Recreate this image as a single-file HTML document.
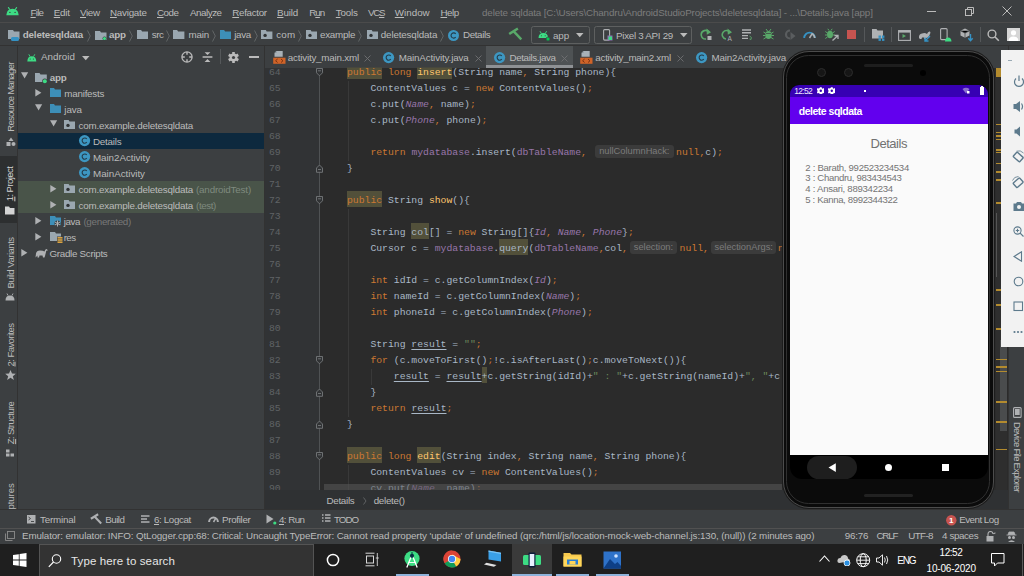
<!DOCTYPE html><html><head><meta charset="utf-8"><style>
*{margin:0;padding:0;box-sizing:border-box}
html,body{width:1024px;height:576px;overflow:hidden;background:#3c3f41;font-family:"Liberation Sans",sans-serif;color:#bbbbbb}
.a{position:absolute;white-space:pre}
.t{line-height:16px}
.m{font-family:"Liberation Mono",monospace;font-size:9.75px;line-height:16px;color:#a9b7c6}
u{text-decoration:underline;text-underline-offset:1px;text-decoration-thickness:1px}
.kw{color:#cc7832}
.fd{color:#9876aa;font-style:italic}
.fn{color:#ffc66d}
.st{color:#6a8759}
.pf{color:#9876aa}
.hl{background:#52503a;display:inline-block;height:16px;padding-top:2px;margin-top:-2px;vertical-align:top;line-height:16px}
.hint{display:inline-block;font-family:"Liberation Sans",sans-serif;font-size:9.3px;color:#7c7c7c;background:#3b3b3b;border-radius:3px;height:13px;line-height:13px;text-align:center;vertical-align:top;margin-top:1.5px;font-style:normal}
.un{text-decoration:underline;text-underline-offset:2px}
</style></head><body>
<div class="a" style="left:0px;top:0px;width:1024px;height:23px;background:#3c3f41;"></div>
<div class="a" style="left:0px;top:22px;width:1024px;height:1px;background:#4b4b4b;"></div>
<svg class="a" style="left:6px;top:7px;" width="14" height="9" viewBox="0 0 14 9"><path d="M0.3 8.3 Q0.6 1.8 6.5 1.8 Q12.4 1.8 12.7 8.3 Z" fill="#3ddc84"/><path d="M2.2 0.2 L3.8 2.6 M10.8 0.2 L9.2 2.6" stroke="#3ddc84" stroke-width="1.1"/><circle cx="3.9" cy="5.4" r="0.7" fill="#3c3f41"/><circle cx="9.1" cy="5.4" r="0.7" fill="#3c3f41"/></svg>
<div class="a t" style="left:30.50px;top:4.50px;font-size:9.8px;color:#bbbbbb;letter-spacing:-0.764px"><u>F</u>ile</div>
<div class="a t" style="left:53.75px;top:4.50px;font-size:9.8px;color:#bbbbbb;letter-spacing:-0.212px"><u>E</u>dit</div>
<div class="a t" style="left:80.00px;top:4.50px;font-size:9.8px;color:#bbbbbb;letter-spacing:-0.355px"><u>V</u>iew</div>
<div class="a t" style="left:110.00px;top:4.50px;font-size:9.8px;color:#bbbbbb;letter-spacing:-0.240px"><u>N</u>avigate</div>
<div class="a t" style="left:157.00px;top:4.50px;font-size:9.8px;color:#bbbbbb;letter-spacing:-0.476px"><u>C</u>ode</div>
<div class="a t" style="left:190.00px;top:4.50px;font-size:9.8px;color:#bbbbbb;letter-spacing:-0.477px">Anal<u>y</u>ze</div>
<div class="a t" style="left:232.30px;top:4.50px;font-size:9.8px;color:#bbbbbb;letter-spacing:-0.320px"><u>R</u>efactor</div>
<div class="a t" style="left:277.10px;top:4.50px;font-size:9.8px;color:#bbbbbb;letter-spacing:-0.173px"><u>B</u>uild</div>
<div class="a t" style="left:309.20px;top:4.50px;font-size:9.8px;color:#bbbbbb;letter-spacing:-0.939px">R<u>u</u>n</div>
<div class="a t" style="left:335.80px;top:4.50px;font-size:9.8px;color:#bbbbbb;letter-spacing:-0.194px"><u>T</u>ools</div>
<div class="a t" style="left:367.90px;top:4.50px;font-size:9.8px;color:#bbbbbb;letter-spacing:-1.225px">VC<u>S</u></div>
<div class="a t" style="left:394.80px;top:4.50px;font-size:9.8px;color:#bbbbbb;letter-spacing:0.009px"><u>W</u>indow</div>
<div class="a t" style="left:440.50px;top:4.50px;font-size:9.8px;color:#bbbbbb;letter-spacing:-0.485px"><u>H</u>elp</div>
<div class="a t" style="left:482.00px;top:4.50px;font-size:9.8px;color:#7d7d7d;letter-spacing:-0.130px">delete sqldata [C:\Users\Chandru\AndroidStudioProjects\deletesqldata] - ...\Details.java [app]</div>
<div class="a" style="left:927px;top:11px;width:9px;height:1px;background:#bbbbbb;"></div>
<svg class="a" style="left:964px;top:6px;" width="11" height="11" viewBox="0 0 11 11"><rect x="1.5" y="3.5" width="6" height="6" fill="none" stroke="#bbbbbb"/><path d="M3.5 3.5 V1.5 H9.5 V7.5 H7.5" fill="none" stroke="#bbbbbb"/></svg>
<svg class="a" style="left:1002px;top:6px;" width="10" height="10" viewBox="0 0 10 10"><path d="M0.5 0.5 L9.5 9.5 M9.5 0.5 L0.5 9.5" stroke="#bbbbbb" stroke-width="1"/></svg>
<div class="a" style="left:0px;top:23px;width:1024px;height:23px;background:#3c3f41;"></div>
<div class="a" style="left:0px;top:45px;width:1024px;height:1px;background:#323232;"></div>
<div class="a" style="left:0px;top:46px;width:17px;height:463px;background:#3c3f41;"></div>
<div class="a" style="left:17px;top:46px;width:1px;height:463px;background:#323232;"></div>
<div class="a" style="left:0px;top:156px;width:17px;height:67px;background:#2d2f30;"></div>
<div class="a" style="left:18px;top:46px;width:247px;height:463px;background:#3c3f41;"></div>
<div class="a" style="left:264px;top:46px;width:1px;height:463px;background:#323232;"></div>
<div class="a" style="left:18px;top:133px;width:246px;height:16px;background:#0d293e;"></div>
<div class="a" style="left:18px;top:181px;width:246px;height:32px;background:#495449;"></div>
<div class="a" style="left:265px;top:46px;width:759px;height:21.5px;background:#3c3f41;"></div>
<div class="a" style="left:486px;top:46px;width:87px;height:20px;background:#4e5254;"></div>
<div class="a" style="left:265px;top:67.5px;width:55px;height:422.5px;background:#313335;"></div>
<div class="a" style="left:320px;top:67.5px;width:704px;height:422.5px;background:#2b2b2b;"></div>
<div class="a" style="left:265px;top:490px;width:759px;height:19px;background:#2f3133;"></div>
<div class="a" style="left:0px;top:509px;width:1024px;height:19px;background:#3c3f41;"></div>
<div class="a" style="left:0px;top:509px;width:1024px;height:1px;background:#323232;"></div>
<div class="a" style="left:0px;top:528px;width:1024px;height:16px;background:#3c3f41;"></div>
<div class="a" style="left:0px;top:528px;width:1024px;height:1px;background:#515151;"></div>
<div class="a" style="left:0px;top:544px;width:1024px;height:32px;background:#1f1f1f;"></div>
<svg class="a" style="left:8px;top:30px;" width="12" height="11" viewBox="0 0 12 11"><path d="M0 0 H5 L6 1.5 H11.5 V9 H0 Z" fill="#9aa7b0"/><rect x="3" y="7" width="8" height="4" rx="1.5" fill="#3592c4"/></svg>
<div class="a t" style="left:22.80px;top:26.80px;font-size:9.8px;color:#bbbbbb;letter-spacing:-0.179px;font-weight:bold;">deletesqldata</div>
<svg class="a" style="left:87px;top:30px;" width="4" height="12" viewBox="0 0 4 12"><path d="M0.5 0.5 L3.3 6 L0.5 11.5" fill="none" stroke="#6b6e70" stroke-width="0.8"/></svg>
<svg class="a" style="left:94.5px;top:31px;" width="12" height="10" viewBox="0 0 12 10"><path d="M0 0 H5 L6 1.5 H11.5 V9 H0 Z" fill="#9aa7b0"/><circle cx="9.5" cy="7.5" r="2" fill="#3c3f41"/><circle cx="9.5" cy="7.5" r="1.6" fill="#3ddc84"/></svg>
<div class="a t" style="left:109.00px;top:26.80px;font-size:9.8px;color:#bbbbbb;letter-spacing:-0.274px;font-weight:bold;">app</div>
<svg class="a" style="left:129px;top:30px;" width="4" height="12" viewBox="0 0 4 12"><path d="M0.5 0.5 L3.3 6 L0.5 11.5" fill="none" stroke="#6b6e70" stroke-width="0.8"/></svg>
<svg class="a" style="left:136.6px;top:30px;" width="11.4" height="10" viewBox="0 0 11.4 10"><path d="M0 0 H4.1 L5.1 1.6 H11.4 V9 H0 Z" fill="#9aa7b0"/></svg>
<div class="a t" style="left:151.80px;top:26.80px;font-size:9.8px;color:#bbbbbb;letter-spacing:-0.521px;">src</div>
<svg class="a" style="left:166.2px;top:30px;" width="4" height="12" viewBox="0 0 4 12"><path d="M0.5 0.5 L3.3 6 L0.5 11.5" fill="none" stroke="#6b6e70" stroke-width="0.8"/></svg>
<svg class="a" style="left:173.4px;top:30px;" width="11.4" height="10" viewBox="0 0 11.4 10"><path d="M0 0 H4.1 L5.1 1.6 H11.4 V9 H0 Z" fill="#9aa7b0"/></svg>
<div class="a t" style="left:188.60px;top:26.80px;font-size:9.8px;color:#bbbbbb;letter-spacing:-0.210px;">main</div>
<svg class="a" style="left:212.3px;top:30px;" width="4" height="12" viewBox="0 0 4 12"><path d="M0.5 0.5 L3.3 6 L0.5 11.5" fill="none" stroke="#6b6e70" stroke-width="0.8"/></svg>
<svg class="a" style="left:219.8px;top:30px;" width="11.4" height="10" viewBox="0 0 11.4 10"><path d="M0 0 H4.1 L5.1 1.6 H11.4 V9 H0 Z" fill="#3d8fb8"/></svg>
<div class="a t" style="left:234.30px;top:26.80px;font-size:9.8px;color:#bbbbbb;letter-spacing:-0.369px;">java</div>
<svg class="a" style="left:254px;top:30px;" width="4" height="12" viewBox="0 0 4 12"><path d="M0.5 0.5 L3.3 6 L0.5 11.5" fill="none" stroke="#6b6e70" stroke-width="0.8"/></svg>
<svg class="a" style="left:261.3px;top:30px;" width="11.4" height="10" viewBox="0 0 11.4 10"><path d="M0 0 H4.8 L5.7 1.5 H11.4 V9 H0 Z" fill="#9aa7b0"/><circle cx="4.1" cy="5.4" r="1.7" fill="#2f3234"/></svg>
<div class="a t" style="left:276.20px;top:26.80px;font-size:9.8px;color:#bbbbbb;letter-spacing:0.195px;">com</div>
<svg class="a" style="left:297.8px;top:30px;" width="4" height="12" viewBox="0 0 4 12"><path d="M0.5 0.5 L3.3 6 L0.5 11.5" fill="none" stroke="#6b6e70" stroke-width="0.8"/></svg>
<svg class="a" style="left:306px;top:30px;" width="11" height="10" viewBox="0 0 11 10"><path d="M0 0 H4.6 L5.5 1.5 H11 V9 H0 Z" fill="#9aa7b0"/><circle cx="4.0" cy="5.4" r="1.7" fill="#2f3234"/></svg>
<div class="a t" style="left:320.00px;top:26.80px;font-size:9.8px;color:#bbbbbb;letter-spacing:-0.263px;">example</div>
<svg class="a" style="left:358.4px;top:30px;" width="4" height="12" viewBox="0 0 4 12"><path d="M0.5 0.5 L3.3 6 L0.5 11.5" fill="none" stroke="#6b6e70" stroke-width="0.8"/></svg>
<svg class="a" style="left:366.6px;top:30px;" width="11.2" height="10" viewBox="0 0 11.2 10"><path d="M0 0 H4.7 L5.6 1.5 H11.2 V9 H0 Z" fill="#9aa7b0"/><circle cx="4.0" cy="5.4" r="1.7" fill="#2f3234"/></svg>
<div class="a t" style="left:380.80px;top:26.80px;font-size:9.8px;color:#bbbbbb;letter-spacing:-0.146px;">deletesqldata</div>
<svg class="a" style="left:440px;top:30px;" width="4" height="12" viewBox="0 0 4 12"><path d="M0.5 0.5 L3.3 6 L0.5 11.5" fill="none" stroke="#6b6e70" stroke-width="0.8"/></svg>
<svg class="a" style="left:447.1px;top:28.5px;" width="13.0" height="13.0" viewBox="0 0 13.0 13.0"><circle cx="6.5" cy="6.5" r="5.5" fill="#3d97c2"/><path d="M8.7 4.9 A2.6 2.6 0 1 0 8.7 8.1" fill="none" stroke="#233c4b" stroke-width="1.1"/></svg>
<div class="a t" style="left:463.00px;top:26.80px;font-size:9.8px;color:#bbbbbb;letter-spacing:-0.379px;">Details</div>
<svg class="a" style="left:508px;top:27px;" width="15" height="15" viewBox="0 0 15 15"><path d="M2.3 6.3 L8.8 2.2" stroke="#59a869" stroke-width="2.6" stroke-linecap="square"/><path d="M5.5 4.2 L13.3 12.4" stroke="#59a869" stroke-width="2.4"/></svg>
<svg class="a" style="left:531px;top:25.5px;" width="59" height="18" viewBox="0 0 59 18"><rect x="0.5" y="0.5" width="58" height="17" rx="2" fill="none" stroke="#5e6060"/></svg>
<svg class="a" style="left:538px;top:31px;" width="13" height="10" viewBox="0 0 13 10"><path d="M0.5 7 Q0.7 2 5.3 2 Q9.9 2 10.1 7 Z" fill="#3ddc84"/><path d="M2 0.2 L3.3 2.4 M8.6 0.2 L7.3 2.4" stroke="#3ddc84" stroke-width="0.9"/><circle cx="3.4" cy="4.8" r="0.55" fill="#3c3f41"/><circle cx="7.2" cy="4.8" r="0.55" fill="#3c3f41"/><circle cx="10" cy="8" r="2" fill="#00c853" stroke="#3c3f41" stroke-width="0.7"/></svg>
<div class="a t" style="left:553.00px;top:27.80px;font-size:9.8px;color:#bbbbbb;letter-spacing:-0.117px;">app</div>
<svg class="a" style="left:576px;top:33px;" width="8" height="5" viewBox="0 0 8 5"><path d="M0 0 H7.5 L3.75 4.2 Z" fill="#bbbbbb"/></svg>
<svg class="a" style="left:594px;top:25.5px;" width="98" height="18" viewBox="0 0 98 18"><rect x="0.5" y="0.5" width="97" height="17" rx="2" fill="none" stroke="#5e6060"/></svg>
<svg class="a" style="left:603px;top:29px;" width="10" height="13" viewBox="0 0 10 13"><rect x="0.6" y="0.6" width="6" height="10.5" rx="1" fill="none" stroke="#afb1b3" stroke-width="1.1"/><rect x="4.5" y="6.5" width="5" height="5" fill="#8e6fb7"/><rect x="5.5" y="7.5" width="3.5" height="3.5" fill="#3ddc84"/></svg>
<div class="a t" style="left:616.00px;top:27.80px;font-size:9.8px;color:#bbbbbb;letter-spacing:-0.287px;">Pixel 3 API 29</div>
<svg class="a" style="left:680px;top:33px;" width="8" height="5" viewBox="0 0 8 5"><path d="M0 0 H7.5 L3.75 4.2 Z" fill="#bbbbbb"/></svg>
<svg class="a" style="left:700px;top:28px;" width="12" height="13" viewBox="0 0 12 13"><path d="M9.5 5 A4.3 4.3 0 1 0 6 11" fill="none" stroke="#59a869" stroke-width="1.6"/><path d="M6.5 0.5 L11 4.2 L6.8 6.8 Z" fill="#59a869"/><rect x="7.5" y="8" width="4" height="4" fill="#afb1b3"/></svg>
<svg class="a" style="left:720.5px;top:28px;" width="12" height="13" viewBox="0 0 12 13"><path d="M9.5 5 A4.3 4.3 0 1 0 5 11" fill="none" stroke="#59a869" stroke-width="1.6"/><path d="M6.5 0.5 L11 4.2 L6.8 6.8 Z" fill="#59a869"/><text x="6.5" y="12.5" font-family="Liberation Sans" font-size="6.5" fill="#afb1b3">A</text></svg>
<svg class="a" style="left:742px;top:29px;" width="11" height="11" viewBox="0 0 11 11"><path d="M0 1 H9 M0 3.8 H9 M0 6.6 H6 M0 9.4 H6" stroke="#afb1b3" stroke-width="1.4"/><path d="M7.5 7 Q10.5 8 9 10.5 L7.5 10" fill="none" stroke="#59a869" stroke-width="0.9"/></svg>
<svg class="a" style="left:763px;top:28px;" width="11" height="12" viewBox="0 0 11 12"><ellipse cx="5.5" cy="7" rx="3.2" ry="4" fill="#59a869"/><path d="M0.5 4 L3 5.5 M10.5 4 L8 5.5 M0 7.5 H2.5 M11 7.5 H8.5 M0.5 11 L3 9.5 M10.5 11 L8 9.5 M3 1 L4.5 3 M8 1 L6.5 3" stroke="#59a869" stroke-width="1"/><path d="M3 5.5 H8" stroke="#3c3f41" stroke-width="0.7"/></svg>
<svg class="a" style="left:783px;top:28px;" width="13" height="13" viewBox="0 0 13 13"><path d="M7 2.5 A4 4 0 1 0 7 10.5" fill="none" stroke="#5a5d5f" stroke-width="2.2"/><path d="M7.5 4 L12.5 8 L7.5 12 Z" fill="#5a5d5f"/></svg>
<svg class="a" style="left:803px;top:30px;" width="13" height="9" viewBox="0 0 13 9"><path d="M1.2 8 A5.3 5.3 0 0 1 11.8 8" fill="none" stroke="#3592c4" stroke-width="1.8"/><path d="M6.5 8 L9.5 3.2" stroke="#afb1b3" stroke-width="1.5"/><path d="M9.5 4 A5.3 5.3 0 0 1 11.8 8" fill="none" stroke="#afb1b3" stroke-width="1.8"/></svg>
<svg class="a" style="left:825px;top:28px;" width="14" height="13" viewBox="0 0 14 13"><ellipse cx="5" cy="6.5" rx="3" ry="3.8" fill="#59a869"/><path d="M0.3 3.5 L2.5 5 M9.7 3.5 L7.5 5 M0 7 H2 M10 7 H8 M0.3 10.5 L2.5 9 M2.8 0.8 L4 2.5 M7.2 0.8 L6 2.5" stroke="#59a869" stroke-width="1"/><path d="M7.5 12.5 L13 7.5 M9.5 7.5 H13 V11" fill="none" stroke="#afb1b3" stroke-width="1.3"/></svg>
<div class="a" style="left:847px;top:30px;width:8.5px;height:8.5px;background:#c75450;"></div>
<div class="a" style="left:864px;top:27px;width:1px;height:15px;background:#55585a;"></div>
<div class="a" style="left:891px;top:27px;width:1px;height:15px;background:#55585a;"></div>
<div class="a" style="left:980px;top:27px;width:1px;height:15px;background:#55585a;"></div>
<svg class="a" style="left:872px;top:29px;" width="13" height="12" viewBox="0 0 13 12"><path d="M0 0 H4.5 L5.5 1.5 H11 V9.5 H0 Z" fill="#afb1b3"/><rect x="6.5" y="6.5" width="2.4" height="2.4" fill="#3592c4"/><rect x="10" y="6.5" width="2.4" height="2.4" fill="#3592c4"/><rect x="6.5" y="9.5" width="2.4" height="2.4" fill="#3592c4"/><rect x="10" y="9.5" width="2.4" height="2.4" fill="#3592c4"/></svg>
<svg class="a" style="left:898px;top:30px;" width="13" height="11" viewBox="0 0 13 11"><rect x="0.6" y="0.6" width="11.8" height="9.8" fill="none" stroke="#afb1b3" stroke-width="1.1"/><rect x="0.6" y="0.6" width="11.8" height="2" fill="#afb1b3"/><path d="M4.5 4 L8 6 L4.5 8 Z" fill="#59a869"/></svg>
<svg class="a" style="left:918px;top:29px;" width="14" height="13" viewBox="0 0 14 13"><path d="M1 9 Q0.5 5 4 4.5 Q7 3.5 9 5 Q10 2 12 2.5 Q13 3.5 12 5 L11 7 Q10 9 8 9 L7.5 10 H6 L6 8.5 L4 8.5 L3.5 10 H2 Z" fill="#afb1b3"/><path d="M12 7 L7 12 M7 8.5 V12 H10.5" fill="none" stroke="#3592c4" stroke-width="1.4"/></svg>
<svg class="a" style="left:940px;top:28px;" width="12" height="14" viewBox="0 0 12 14"><rect x="0.6" y="0.6" width="6.5" height="11" rx="1" fill="none" stroke="#afb1b3" stroke-width="1.1"/><path d="M5 13.5 Q5.3 9.5 8.2 9.5 Q11.2 9.5 11.5 13.5 Z" fill="#3ddc84"/></svg>
<svg class="a" style="left:960px;top:28px;" width="14" height="14" viewBox="0 0 14 14"><path d="M5 0.5 L9.5 2.8 V7.5 L5 9.8 L0.5 7.5 V2.8 Z" fill="#afb1b3"/><path d="M0.5 2.8 L5 5 L9.5 2.8 M5 5 V9.8" stroke="#3c3f41" stroke-width="0.7"/><path d="M10.5 6 V12.5 M8.3 10.2 L10.5 12.7 L12.7 10.2" fill="none" stroke="#3592c4" stroke-width="1.4"/></svg>
<svg class="a" style="left:987px;top:29px;" width="13" height="13" viewBox="0 0 13 13"><circle cx="5" cy="5" r="3.9" fill="none" stroke="#bbbbbb" stroke-width="1.4"/><path d="M7.8 7.8 L11.8 11.8" stroke="#bbbbbb" stroke-width="1.6"/></svg>
<svg class="a" style="left:1007px;top:28px;" width="13" height="13" viewBox="0 0 13 13"><rect width="13" height="13" fill="#d6d6d6"/><circle cx="6.5" cy="4.8" r="2.6" fill="#ffffff"/><path d="M1.5 13 Q1.5 8.5 6.5 8.5 Q11.5 8.5 11.5 13 Z" fill="#ffffff"/></svg>
<svg class="a" style="left:27px;top:53.5px;" width="10" height="8" viewBox="0 0 10 8"><path d="M0.3 7.5 Q0.5 2.2 4.8 2.2 Q9.1 2.2 9.3 7.5 Z" fill="#3ddc84"/><path d="M1.8 0.3 L3 2.5 M7.8 0.3 L6.6 2.5" stroke="#3ddc84" stroke-width="0.9"/><circle cx="3.2" cy="5" r="0.6" fill="#3c3f41"/><circle cx="6.4" cy="5" r="0.6" fill="#3c3f41"/></svg>
<div class="a t" style="left:41.00px;top:49.30px;font-size:9.8px;color:#bbbbbb;letter-spacing:0.032px;">Android</div>
<svg class="a" style="left:82px;top:55.5px;" width="8" height="5" viewBox="0 0 8 5"><path d="M0 0 H7.5 L3.75 4.2 Z" fill="#bbbbbb"/></svg>
<svg class="a" style="left:180.5px;top:51px;" width="12" height="12" viewBox="0 0 12 12"><circle cx="6" cy="6" r="5.1" fill="none" stroke="#bbbbbb" stroke-width="1.3"/><path d="M6 1 V3.8 M6 8.2 V11 M1 6 H3.8 M8.2 6 H11" stroke="#bbbbbb" stroke-width="1.4"/></svg>
<svg class="a" style="left:202px;top:51px;" width="11" height="12" viewBox="0 0 11 12"><path d="M0.6 6 H10.4" stroke="#bbbbbb" stroke-width="1.5"/><path d="M2.6 1.2 H8.4 L5.5 3.9 Z M2.6 10.9 H8.4 L5.5 8.1 Z" fill="#bbbbbb"/></svg>
<div class="a" style="left:220.2px;top:49px;width:1px;height:15px;background:#55585a;"></div>
<svg class="a" style="left:227.8px;top:51.5px;" width="11" height="11" viewBox="0 0 11 11"><g transform="translate(5.5 5.5)" fill="#bbbbbb"><circle r="3.9"/><rect x="-1.3" y="-5.5" width="2.6" height="11"/><rect x="-1.3" y="-5.5" width="2.6" height="11" transform="rotate(60)"/><rect x="-1.3" y="-5.5" width="2.6" height="11" transform="rotate(120)"/></g><circle cx="5.5" cy="5.5" r="1.6" fill="#3c3f41"/></svg>
<div class="a" style="left:249.4px;top:56.2px;width:9.6px;height:1.6px;background:#bbbbbb;"></div>
<svg class="a" style="left:20.8px;top:72.0px;" width="8" height="8" viewBox="0 0 8 8"><path d="M0 0.3 H7.2 L3.6 6.5 Z" fill="#afb1b3"/></svg>
<svg class="a" style="left:35px;top:72.5px;" width="13" height="11" viewBox="0 0 13 11"><path d="M0 0 H4.5 L5.5 1.5 H11.8 V9 H0 Z" fill="#9aa7b0"/><circle cx="9.8" cy="8.2" r="2.6" fill="#3c3f41"/><circle cx="9.8" cy="8.2" r="2" fill="#3ddc84"/></svg>
<div class="a t" style="left:49.80px;top:69.50px;font-size:9.8px;color:#bbbbbb;letter-spacing:-0.274px;font-weight:bold;">app</div>
<svg class="a" style="left:35px;top:88.5px;" width="7" height="8" viewBox="0 0 7 8"><path d="M0.3 0 L6.4 3.75 L0.3 7.5 Z" fill="#afb1b3"/></svg>
<svg class="a" style="left:49.8px;top:87.5px;" width="11" height="10" viewBox="0 0 11 10"><path d="M0 0 H4.0 L5.0 1.6 H11 V9 H0 Z" fill="#3d8fb8"/></svg>
<div class="a t" style="left:64.30px;top:85.50px;font-size:9.8px;color:#bbbbbb;letter-spacing:-0.226px;">manifests</div>
<svg class="a" style="left:34.5px;top:104.0px;" width="8" height="8" viewBox="0 0 8 8"><path d="M0 0.3 H7.2 L3.6 6.5 Z" fill="#afb1b3"/></svg>
<svg class="a" style="left:49.8px;top:103.5px;" width="11" height="10" viewBox="0 0 11 10"><path d="M0 0 H4.0 L5.0 1.6 H11 V9 H0 Z" fill="#3d8fb8"/></svg>
<div class="a t" style="left:64.30px;top:101.50px;font-size:9.8px;color:#bbbbbb;letter-spacing:-0.069px;">java</div>
<svg class="a" style="left:49.5px;top:120.0px;" width="8" height="8" viewBox="0 0 8 8"><path d="M0 0.3 H7.2 L3.6 6.5 Z" fill="#afb1b3"/></svg>
<svg class="a" style="left:64.3px;top:119.5px;" width="11" height="10" viewBox="0 0 11 10"><path d="M0 0 H4.6 L5.5 1.5 H11 V9 H0 Z" fill="#9aa7b0"/><circle cx="4.0" cy="5.4" r="1.7" fill="#2f3234"/></svg>
<div class="a t" style="left:78.60px;top:117.50px;font-size:9.8px;color:#bbbbbb;letter-spacing:-0.196px;">com.example.deletesqldata</div>
<svg class="a" style="left:77.7px;top:134.1px;" width="13.2" height="13.2" viewBox="0 0 13.2 13.2"><circle cx="6.6" cy="6.6" r="5.6" fill="#3d97c2"/><path d="M8.8 5.0 A2.6 2.6 0 1 0 8.8 8.2" fill="none" stroke="#233c4b" stroke-width="1.1"/></svg>
<div class="a t" style="left:93.00px;top:133.50px;font-size:9.8px;color:#bbbbbb;letter-spacing:-0.208px;">Details</div>
<svg class="a" style="left:77.7px;top:150.1px;" width="13.2" height="13.2" viewBox="0 0 13.2 13.2"><circle cx="6.6" cy="6.6" r="5.6" fill="#3d97c2"/><path d="M8.8 5.0 A2.6 2.6 0 1 0 8.8 8.2" fill="none" stroke="#233c4b" stroke-width="1.1"/></svg>
<div class="a t" style="left:93.00px;top:149.50px;font-size:9.8px;color:#bbbbbb;letter-spacing:-0.056px;">Main2Activity</div>
<svg class="a" style="left:77.7px;top:166.1px;" width="13.2" height="13.2" viewBox="0 0 13.2 13.2"><circle cx="6.6" cy="6.6" r="5.6" fill="#3d97c2"/><path d="M8.8 5.0 A2.6 2.6 0 1 0 8.8 8.2" fill="none" stroke="#233c4b" stroke-width="1.1"/></svg>
<div class="a t" style="left:93.00px;top:165.50px;font-size:9.8px;color:#bbbbbb;letter-spacing:-0.023px;">MainActivity</div>
<svg class="a" style="left:49.5px;top:184.5px;" width="7" height="8" viewBox="0 0 7 8"><path d="M0.3 0 L6.4 3.75 L0.3 7.5 Z" fill="#afb1b3"/></svg>
<svg class="a" style="left:64.3px;top:183.5px;" width="11" height="10" viewBox="0 0 11 10"><path d="M0 0 H4.6 L5.5 1.5 H11 V9 H0 Z" fill="#9aa7b0"/><circle cx="4.0" cy="5.4" r="1.7" fill="#2f3234"/></svg>
<div class="a t" style="left:78.60px;top:181.50px;font-size:9.8px;color:#bbbbbb;letter-spacing:-0.196px;">com.example.deletesqldata</div>
<div class="a t" style="left:196.00px;top:181.50px;font-size:9.8px;color:#7f8a7f;letter-spacing:-0.169px;">(androidTest)</div>
<svg class="a" style="left:49.5px;top:200.5px;" width="7" height="8" viewBox="0 0 7 8"><path d="M0.3 0 L6.4 3.75 L0.3 7.5 Z" fill="#afb1b3"/></svg>
<svg class="a" style="left:64.3px;top:199.5px;" width="11" height="10" viewBox="0 0 11 10"><path d="M0 0 H4.6 L5.5 1.5 H11 V9 H0 Z" fill="#9aa7b0"/><circle cx="4.0" cy="5.4" r="1.7" fill="#2f3234"/></svg>
<div class="a t" style="left:78.60px;top:197.50px;font-size:9.8px;color:#bbbbbb;letter-spacing:-0.196px;">com.example.deletesqldata</div>
<div class="a t" style="left:196.00px;top:197.50px;font-size:9.8px;color:#7f8a7f;letter-spacing:-0.387px;">(test)</div>
<svg class="a" style="left:35px;top:216.5px;" width="7" height="8" viewBox="0 0 7 8"><path d="M0.3 0 L6.4 3.75 L0.3 7.5 Z" fill="#afb1b3"/></svg>
<svg class="a" style="left:49.8px;top:215.5px;" width="12" height="11" viewBox="0 0 12 11"><path d="M0 0 H5 L6 1.5 H11 V9 H0 Z" fill="#3d8fb8"/><circle cx="7.5" cy="7.5" r="3" fill="#3c3f41"/><path d="M7.5 4.5 V10.5 M4.9 6 L10.1 9 M4.9 9 L10.1 6" stroke="#afb1b3" stroke-width="1"/></svg>
<div class="a t" style="left:63.70px;top:213.50px;font-size:9.8px;color:#bbbbbb;letter-spacing:-0.419px;">java</div>
<div class="a t" style="left:83.40px;top:213.50px;font-size:9.8px;color:#787878;letter-spacing:-0.279px;">(generated)</div>
<svg class="a" style="left:35px;top:232.5px;" width="7" height="8" viewBox="0 0 7 8"><path d="M0.3 0 L6.4 3.75 L0.3 7.5 Z" fill="#afb1b3"/></svg>
<svg class="a" style="left:49.8px;top:231.5px;" width="13" height="11" viewBox="0 0 13 11"><path d="M0 0 H5 L6 1.5 H11 V9 H0 Z" fill="#9aa7b0"/><rect x="7" y="4.5" width="6" height="6.5" fill="#3c3f41"/><rect x="7.5" y="5" width="5" height="1.6" fill="#d9a343"/><rect x="7.5" y="7.2" width="5" height="1.6" fill="#d9a343"/><rect x="7.5" y="9.4" width="5" height="1.6" fill="#d9a343"/></svg>
<div class="a t" style="left:63.70px;top:229.50px;font-size:9.8px;color:#bbbbbb;letter-spacing:-0.605px;">res</div>
<svg class="a" style="left:20.8px;top:248.5px;" width="7" height="8" viewBox="0 0 7 8"><path d="M0.3 0 L6.4 3.75 L0.3 7.5 Z" fill="#afb1b3"/></svg>
<svg class="a" style="left:35px;top:247.5px;" width="13" height="10" viewBox="0 0 13 10"><path d="M0.5 9.5 L1 5.5 Q1.5 2.5 5 2.5 Q8 2.5 9.5 3.5 Q10 1 11.5 1 Q12.8 1.2 12.5 3 L12 2.5 Q11 2.2 11 4 L10.5 6 Q10 8 9.5 9.5 H8 L7.5 7.5 H4.5 L4 9.5 H2.5 L2.5 7.5 Z" fill="#afb1b3"/></svg>
<div class="a t" style="left:49.50px;top:245.50px;font-size:9.8px;color:#bbbbbb;letter-spacing:-0.292px;">Gradle Scripts</div>
<svg class="a" style="left:272.5px;top:51px;" width="13" height="13" viewBox="0 0 13 13"><path d="M3.4 0 H9.7 V5.8 H1.5 V2 Z" fill="#a9b1b7"/><path d="M3.4 0 V2 H1.5 Z" fill="#7f8a92"/><rect x="0.2" y="6.7" width="12.3" height="6.1" fill="#cf6328"/><path d="M4.6 8 L2.6 9.75 L4.6 11.5 M8 8 L10 9.75 L8 11.5" fill="none" stroke="#7b3413" stroke-width="1"/></svg>
<div class="a t" style="left:287.80px;top:49.50px;font-size:9.8px;color:#bbbbbb;letter-spacing:-0.206px;">activity_main.xml</div>
<svg class="a" style="left:364px;top:54.5px;" width="7" height="7" viewBox="0 0 7 7"><path d="M0.5 0.5 L6.5 6.5 M6.5 0.5 L0.5 6.5" stroke="#6f7173" stroke-width="0.9"/></svg>
<svg class="a" style="left:381.9px;top:51.199999999999996px;" width="13.2" height="13.2" viewBox="0 0 13.2 13.2"><circle cx="6.6" cy="6.6" r="5.6" fill="#3d97c2"/><path d="M8.8 5.0 A2.6 2.6 0 1 0 8.8 8.2" fill="none" stroke="#233c4b" stroke-width="1.1"/></svg>
<div class="a t" style="left:398.70px;top:49.50px;font-size:9.8px;color:#bbbbbb;letter-spacing:-0.138px;">MainActivity.java</div>
<svg class="a" style="left:475px;top:54.5px;" width="7" height="7" viewBox="0 0 7 7"><path d="M0.5 0.5 L6.5 6.5 M6.5 0.5 L0.5 6.5" stroke="#6f7173" stroke-width="0.9"/></svg>
<svg class="a" style="left:492.59999999999997px;top:51.199999999999996px;" width="13.2" height="13.2" viewBox="0 0 13.2 13.2"><circle cx="6.6" cy="6.6" r="5.6" fill="#3d97c2"/><path d="M8.8 5.0 A2.6 2.6 0 1 0 8.8 8.2" fill="none" stroke="#233c4b" stroke-width="1.1"/></svg>
<div class="a t" style="left:509.50px;top:49.50px;font-size:9.8px;color:#bbbbbb;letter-spacing:-0.380px;">Details.java</div>
<svg class="a" style="left:561px;top:54.5px;" width="7" height="7" viewBox="0 0 7 7"><path d="M0.5 0.5 L6.5 6.5 M6.5 0.5 L0.5 6.5" stroke="#6f7173" stroke-width="0.9"/></svg>
<svg class="a" style="left:580px;top:51px;" width="13" height="13" viewBox="0 0 13 13"><path d="M3.4 0 H9.7 V5.8 H1.5 V2 Z" fill="#a9b1b7"/><path d="M3.4 0 V2 H1.5 Z" fill="#7f8a92"/><rect x="0.2" y="6.7" width="12.3" height="6.1" fill="#cf6328"/><path d="M4.6 8 L2.6 9.75 L4.6 11.5 M8 8 L10 9.75 L8 11.5" fill="none" stroke="#7b3413" stroke-width="1"/></svg>
<div class="a t" style="left:595.30px;top:49.50px;font-size:9.8px;color:#bbbbbb;letter-spacing:-0.248px;">activity_main2.xml</div>
<svg class="a" style="left:677px;top:54.5px;" width="7" height="7" viewBox="0 0 7 7"><path d="M0.5 0.5 L6.5 6.5 M6.5 0.5 L0.5 6.5" stroke="#6f7173" stroke-width="0.9"/></svg>
<svg class="a" style="left:695.0px;top:51.199999999999996px;" width="13.2" height="13.2" viewBox="0 0 13.2 13.2"><circle cx="6.6" cy="6.6" r="5.6" fill="#3d97c2"/><path d="M8.8 5.0 A2.6 2.6 0 1 0 8.8 8.2" fill="none" stroke="#233c4b" stroke-width="1.1"/></svg>
<div class="a t" style="left:711.60px;top:49.50px;font-size:9.8px;color:#bbbbbb;letter-spacing:-0.183px;">Main2Activity.java</div>
<div class="a" style="left:486px;top:65.4px;width:87px;height:2.5px;background:#8e9194;"></div>
<div class="a m" style="left:255.7px;top:65px;width:25px;text-align:right;color:#606366">64</div>
<div class="a m" style="left:255.7px;top:81px;width:25px;text-align:right;color:#606366">65</div>
<div class="a m" style="left:255.7px;top:97px;width:25px;text-align:right;color:#606366">66</div>
<div class="a m" style="left:255.7px;top:113px;width:25px;text-align:right;color:#606366">67</div>
<div class="a m" style="left:255.7px;top:129px;width:25px;text-align:right;color:#606366">68</div>
<div class="a m" style="left:255.7px;top:145px;width:25px;text-align:right;color:#606366">69</div>
<div class="a m" style="left:255.7px;top:161px;width:25px;text-align:right;color:#606366">70</div>
<div class="a m" style="left:255.7px;top:177px;width:25px;text-align:right;color:#606366">71</div>
<div class="a m" style="left:255.7px;top:193px;width:25px;text-align:right;color:#606366">72</div>
<div class="a m" style="left:255.7px;top:209px;width:25px;text-align:right;color:#606366">73</div>
<div class="a m" style="left:255.7px;top:225px;width:25px;text-align:right;color:#606366">74</div>
<div class="a m" style="left:255.7px;top:241px;width:25px;text-align:right;color:#606366">75</div>
<div class="a m" style="left:255.7px;top:257px;width:25px;text-align:right;color:#606366">76</div>
<div class="a m" style="left:255.7px;top:273px;width:25px;text-align:right;color:#606366">77</div>
<div class="a m" style="left:255.7px;top:289px;width:25px;text-align:right;color:#606366">78</div>
<div class="a m" style="left:255.7px;top:305px;width:25px;text-align:right;color:#606366">79</div>
<div class="a m" style="left:255.7px;top:321px;width:25px;text-align:right;color:#606366">80</div>
<div class="a m" style="left:255.7px;top:337px;width:25px;text-align:right;color:#606366">81</div>
<div class="a m" style="left:255.7px;top:353px;width:25px;text-align:right;color:#606366">82</div>
<div class="a m" style="left:255.7px;top:369px;width:25px;text-align:right;color:#606366">83</div>
<div class="a m" style="left:255.7px;top:385px;width:25px;text-align:right;color:#606366">84</div>
<div class="a m" style="left:255.7px;top:401px;width:25px;text-align:right;color:#606366">85</div>
<div class="a m" style="left:255.7px;top:417px;width:25px;text-align:right;color:#606366">86</div>
<div class="a m" style="left:255.7px;top:433px;width:25px;text-align:right;color:#606366">87</div>
<div class="a m" style="left:255.7px;top:449px;width:25px;text-align:right;color:#606366">88</div>
<div class="a m" style="left:255.7px;top:465px;width:25px;text-align:right;color:#606366">89</div>
<div class="a m" style="left:255.7px;top:481px;width:25px;text-align:right;color:#606366">90</div>
<div class="a" style="left:318.5px;top:67.5px;width:1px;height:422.5px;background:#4f5254;"></div>
<svg class="a" style="left:315.5px;top:68px;" width="8" height="9" viewBox="0 0 8 9"><path d="M0.5 0.5 H6.5 V4.8 L3.5 7.8 L0.5 4.8 Z" fill="#313335" stroke="#75787a" stroke-width="0.9"/><path d="M2 2.8 H5" stroke="#75787a" stroke-width="0.9"/></svg>
<svg class="a" style="left:315.5px;top:196px;" width="8" height="9" viewBox="0 0 8 9"><path d="M0.5 0.5 H6.5 V4.8 L3.5 7.8 L0.5 4.8 Z" fill="#313335" stroke="#75787a" stroke-width="0.9"/><path d="M2 2.8 H5" stroke="#75787a" stroke-width="0.9"/></svg>
<svg class="a" style="left:315.5px;top:356px;" width="8" height="9" viewBox="0 0 8 9"><path d="M0.5 0.5 H6.5 V4.8 L3.5 7.8 L0.5 4.8 Z" fill="#313335" stroke="#75787a" stroke-width="0.9"/><path d="M2 2.8 H5" stroke="#75787a" stroke-width="0.9"/></svg>
<svg class="a" style="left:315.5px;top:452px;" width="8" height="9" viewBox="0 0 8 9"><path d="M0.5 0.5 H6.5 V4.8 L3.5 7.8 L0.5 4.8 Z" fill="#313335" stroke="#75787a" stroke-width="0.9"/><path d="M2 2.8 H5" stroke="#75787a" stroke-width="0.9"/></svg>
<svg class="a" style="left:315.5px;top:164px;" width="8" height="9" viewBox="0 0 8 9"><path d="M0.5 8.3 H6.5 V4 L3.5 1 L0.5 4 Z" fill="#313335" stroke="#75787a" stroke-width="0.9"/><path d="M2 5.5 H5" stroke="#75787a" stroke-width="0.9"/></svg>
<svg class="a" style="left:315.5px;top:388px;" width="8" height="9" viewBox="0 0 8 9"><path d="M0.5 8.3 H6.5 V4 L3.5 1 L0.5 4 Z" fill="#313335" stroke="#75787a" stroke-width="0.9"/><path d="M2 5.5 H5" stroke="#75787a" stroke-width="0.9"/></svg>
<svg class="a" style="left:315.5px;top:420px;" width="8" height="9" viewBox="0 0 8 9"><path d="M0.5 8.3 H6.5 V4 L3.5 1 L0.5 4 Z" fill="#313335" stroke="#75787a" stroke-width="0.9"/><path d="M2 5.5 H5" stroke="#75787a" stroke-width="0.9"/></svg>
<div class="a" style="left:0;top:0;width:782px;height:490px;clip-path:inset(67.5px 0 0 0)">
<div class="a m" style="left:323.6px;top:65px">    <span class="kw hl">public</span><span class="kw"> long </span><span class="fn hl">insert</span>(String name<span class="kw">, </span>String phone){</div>
<div class="a m" style="left:323.6px;top:81px">        ContentValues c = <span class="kw">new </span>ContentValues()<span class="kw">;</span></div>
<div class="a m" style="left:323.6px;top:97px">        c.put(<span class="fd">Name</span><span class="kw">, </span>name)<span class="kw">;</span></div>
<div class="a m" style="left:323.6px;top:113px">        c.put(<span class="fd">Phone</span><span class="kw">, </span>phone)<span class="kw">;</span></div>
<div class="a m" style="left:323.6px;top:145px">        <span class="kw">return </span><span class="pf">mydatabase</span>.insert(<span class="pf">dbTableName</span><span class="kw">, </span><span class="hint" style="margin:0 2.5px 0 2.2px;width:78.6px">nullColumnHack:</span><span class="kw">null,</span>c)<span class="kw">;</span></div>
<div class="a m" style="left:323.6px;top:161px">    }</div>
<div class="a m" style="left:323.6px;top:193px">    <span class="kw hl">public</span> String <span class="fn">show</span>(){</div>
<div class="a m" style="left:323.6px;top:225px">        String <span class="hl">col</span>[] = <span class="kw">new </span>String[]{<span class="fd">Id</span><span class="kw">, </span><span class="fd">Name</span><span class="kw">, </span><span class="fd">Phone</span>}<span class="kw">;</span></div>
<div class="a m" style="left:323.6px;top:241px">        Cursor c = <span class="pf">mydatabase</span>.<span class="hl">query</span>(<span class="pf">dbTableName</span><span class="kw">,</span>col<span class="kw">, </span><span class="hint" style="margin:0 3.1px 0 -3.45px;width:46.2px">selection:</span><span class="kw">null,</span><span class="hint" style="margin:0 2px 0 2.55px;width:64.6px">selectionArgs:</span><span class="kw">n</span></div>
<div class="a m" style="left:323.6px;top:273px">        <span class="kw">int </span>idId = c.getColumnIndex(<span class="fd">Id</span>)<span class="kw">;</span></div>
<div class="a m" style="left:323.6px;top:289px">        <span class="kw">int </span>nameId = c.getColumnIndex(<span class="fd">Name</span>)<span class="kw">;</span></div>
<div class="a m" style="left:323.6px;top:305px">        <span class="kw">int </span>phoneId = c.getColumnIndex(<span class="fd">Phone</span>)<span class="kw">;</span></div>
<div class="a m" style="left:323.6px;top:337px">        String <span class="un">result</span> = <span class="st">""</span><span class="kw">;</span></div>
<div class="a m" style="left:323.6px;top:353px">        <span class="kw">for </span>(c.moveToFirst()<span class="kw">;</span>!c.isAfterLast()<span class="kw">;</span>c.moveToNext()){</div>
<div class="a m" style="left:323.6px;top:369px">            <span class="un">result</span> = <span class="un">result</span><span class="hl">+</span>c.getString(idId)+<span class="st">" : "</span>+c.getString(nameId)+<span class="st">", "</span>+c</div>
<div class="a m" style="left:323.6px;top:385px">        }</div>
<div class="a m" style="left:323.6px;top:401px">        <span class="kw">return </span><span class="un">result</span><span class="kw">;</span></div>
<div class="a m" style="left:323.6px;top:417px">    }</div>
<div class="a m" style="left:323.6px;top:449px">    <span class="kw hl">public</span><span class="kw"> long </span><span class="fn hl">edit</span>(String index<span class="kw">, </span>String name<span class="kw">, </span>String phone){</div>
<div class="a m" style="left:323.6px;top:465px">        ContentValues cv = <span class="kw">new </span>ContentValues()<span class="kw">;</span></div>
<div class="a m" style="left:323.6px;top:481px">        cv.put(<span class="fd">Name</span><span class="kw">, </span>name)<span class="kw">;</span></div>
</div>
<div class="a" style="left:347.5px;top:81px;width:1px;height:80px;background:#393939;"></div>
<div class="a" style="left:347.5px;top:209px;width:1px;height:208px;background:#393939;"></div>
<div class="a" style="left:370.90000000000003px;top:369px;width:1px;height:16px;background:#393939;"></div>
<div class="a" style="left:347.5px;top:465px;width:1px;height:32px;background:#393939;"></div>
<div class="a" style="left:265px;top:490px;width:759px;height:19px;background:#2f3133;"></div>
<div class="a" style="left:324px;top:483.5px;width:458px;height:6px;background:rgba(90,90,90,0.55);"></div>
<div class="a t" style="left:326.50px;top:493.00px;font-size:9.8px;color:#bbbbbb;letter-spacing:-0.294px;">Details</div>
<svg class="a" style="left:363px;top:497px;" width="4" height="8" viewBox="0 0 4 8"><path d="M0.5 0.5 L3 4 L0.5 7.5" fill="none" stroke="#6b6e70" stroke-width="0.8"/></svg>
<div class="a t" style="left:373.70px;top:493.00px;font-size:9.8px;color:#bbbbbb;letter-spacing:-0.279px;">delete()</div>
<div class="a t" style="left:-23.85px;top:89.15px;width:69.30px;font-size:9.5px;color:#bbbbbb;letter-spacing:-0.718px;transform:rotate(-90deg);transform-origin:50% 50%;text-align:left">Resource Manager</div>
<svg class="a" style="left:6px;top:137px;" width="10" height="9" viewBox="0 0 10 9"><path d="M5 0.5 L7.5 4 H2.5 Z" fill="#afb1b3"/><rect x="0.5" y="5" width="4" height="4" fill="#afb1b3"/><circle cx="7.5" cy="7" r="2" fill="#afb1b3"/></svg>
<div class="a t" style="left:-6.55px;top:176.15px;width:34.70px;font-size:9.5px;color:#d4d4d4;letter-spacing:-0.543px;transform:rotate(-90deg);transform-origin:50% 50%;text-align:left"><u>1</u>: Project</div>
<svg class="a" style="left:5px;top:205.5px;" width="10" height="9" viewBox="0 0 10 9"><path d="M0 0.5 H4 L5 2 H9.5 V8.5 H0 Z" fill="#d4d4d4"/></svg>
<div class="a t" style="left:-14.80px;top:255.30px;width:51.20px;font-size:9.5px;color:#bbbbbb;letter-spacing:-0.479px;transform:rotate(-90deg);transform-origin:50% 50%;text-align:left">Build Variants</div>
<svg class="a" style="left:5px;top:293px;" width="10" height="8" viewBox="0 0 10 8"><path d="M0.5 7.5 Q0.5 2.5 5 2.5 Q9.5 2.5 9.5 7.5 Z" fill="#afb1b3"/><path d="M2 0.5 L3 2.5 M8 0.5 L7 2.5" stroke="#afb1b3" stroke-width="0.9"/></svg>
<div class="a t" style="left:-10.70px;top:336.50px;width:43.00px;font-size:9.5px;color:#bbbbbb;letter-spacing:-0.552px;transform:rotate(-90deg);transform-origin:50% 50%;text-align:left"><u>2</u>: Favorites</div>
<svg class="a" style="left:5px;top:370px;" width="11" height="10" viewBox="0 0 11 10"><path d="M5.5 0 L7 3.6 L10.8 3.8 L7.8 6.2 L8.9 10 L5.5 7.8 L2.1 10 L3.2 6.2 L0.2 3.8 L4 3.6 Z" fill="#afb1b3"/></svg>
<div class="a t" style="left:-10.35px;top:414.85px;width:42.30px;font-size:9.5px;color:#bbbbbb;letter-spacing:-0.610px;transform:rotate(-90deg);transform-origin:50% 50%;text-align:left"><u>Z</u>: Structure</div>
<svg class="a" style="left:6px;top:449px;" width="9" height="8" viewBox="0 0 9 8"><rect x="0" y="0.5" width="3.5" height="3" fill="#afb1b3"/><rect x="0" y="4.5" width="3.5" height="3" fill="#afb1b3"/><rect x="4.5" y="4.5" width="3.5" height="3" fill="#afb1b3"/></svg>
<div class="a" style="left:0;top:470px;width:17px;height:39px;overflow:hidden"><div class="a t" style="left:-9.2px;top:23.5px;width:39.5px;font-size:9.5px;transform:rotate(-90deg);transform-origin:50% 50%">Captures</div></div>
<svg class="a" style="left:26.5px;top:514.5px;" width="9" height="9" viewBox="0 0 9 9"><rect x="0" y="0" width="8.5" height="8.5" fill="#afb1b3"/><path d="M1.5 2 L3.5 3.5 L1.5 5 M4 6.5 H7" fill="none" stroke="#3c3f41" stroke-width="0.9"/></svg>
<div class="a t" style="left:40.00px;top:511.50px;font-size:9.8px;color:#bbbbbb;letter-spacing:-0.204px;">Terminal</div>
<svg class="a" style="left:90px;top:512.5px;" width="13" height="13" viewBox="0 0 13 13"><path d="M1.8 5.2 L7.2 1.8" stroke="#afb1b3" stroke-width="2.2" stroke-linecap="square"/><path d="M4.5 3.5 L11.2 10.5" stroke="#afb1b3" stroke-width="2"/></svg>
<div class="a t" style="left:105.30px;top:511.50px;font-size:9.8px;color:#bbbbbb;letter-spacing:-0.538px;">Build</div>
<svg class="a" style="left:141px;top:514.5px;" width="9" height="9" viewBox="0 0 9 9"><path d="M0 1 H8.5 M0 4 H6 M0 7 H8.5" stroke="#afb1b3" stroke-width="1.3"/></svg>
<div class="a t" style="left:154.00px;top:511.50px;font-size:9.8px;color:#bbbbbb;letter-spacing:-0.380px;">6: Logcat</div>
<div class="a" style="left:154px;top:524.2px;width:4.5px;height:0.8px;background:#bbbbbb"></div>
<svg class="a" style="left:207.5px;top:514px;" width="11" height="9" viewBox="0 0 11 9"><path d="M1.1 8 A4.4 4.4 0 0 1 9.9 8" fill="none" stroke="#afb1b3" stroke-width="2"/><path d="M5.5 8 L8 3.8" stroke="#afb1b3" stroke-width="1.5"/></svg>
<div class="a t" style="left:222.00px;top:511.50px;font-size:9.8px;color:#bbbbbb;letter-spacing:-0.318px;">Profiler</div>
<svg class="a" style="left:266px;top:514px;" width="11" height="11" viewBox="0 0 11 11"><path d="M0.5 0.5 L7.5 5 L0.5 9.5 Z" fill="#afb1b3"/><circle cx="8.8" cy="9" r="1.6" fill="#3ddc84"/></svg>
<div class="a t" style="left:279.00px;top:511.50px;font-size:9.8px;color:#bbbbbb;letter-spacing:-0.579px;">4: Run</div>
<div class="a" style="left:279px;top:524.2px;width:4.5px;height:0.8px;background:#bbbbbb"></div>
<svg class="a" style="left:321.5px;top:514px;" width="9" height="9" viewBox="0 0 9 9"><path d="M0 1 H1.5 M3 1 H8.5 M0 4 H1.5 M3 4 H8.5 M0 7 H1.5 M3 7 H8.5" stroke="#afb1b3" stroke-width="1.3"/></svg>
<div class="a t" style="left:334.00px;top:511.50px;font-size:9.8px;color:#bbbbbb;letter-spacing:-0.983px;">TODO</div>
<svg class="a" style="left:945.5px;top:514.5px;" width="11" height="11" viewBox="0 0 11 11"><circle cx="5.3" cy="5.3" r="5.2" fill="#c75450"/><text x="5.3" y="8.3" font-family="Liberation Sans" font-size="8" font-weight="bold" fill="#ffffff" text-anchor="middle">1</text></svg>
<div class="a t" style="left:959.20px;top:511.50px;font-size:9.8px;color:#bbbbbb;letter-spacing:-0.515px;">Event Log</div>
<svg class="a" style="left:5px;top:531px;" width="10" height="10" viewBox="0 0 10 10"><rect x="2.5" y="0.5" width="7" height="7" fill="none" stroke="#8c8c8c" stroke-width="0.9"/><path d="M0.5 2.5 V9.5 H7.5" fill="none" stroke="#8c8c8c" stroke-width="0.9"/></svg>
<div class="a t" style="left:22.00px;top:527.80px;font-size:9.8px;color:#bbbbbb;letter-spacing:-0.118px;">Emulator: emulator: INFO: QtLogger.cpp:68: Critical: Uncaught TypeError: Cannot read property &#x27;update&#x27; of undefined (qrc:/html/js/location-mock-web-channel.js:130, (null)) (2 minutes ago)</div>
<div class="a t" style="left:844.80px;top:527.80px;font-size:9.8px;color:#bbbbbb;letter-spacing:-0.225px;">96:76</div>
<div class="a t" style="left:876.50px;top:527.80px;font-size:9.8px;color:#bbbbbb;letter-spacing:-1.223px;">CRLF</div>
<div class="a t" style="left:908.20px;top:527.80px;font-size:9.8px;color:#bbbbbb;letter-spacing:-0.593px;">UTF-8</div>
<div class="a t" style="left:942.00px;top:527.80px;font-size:9.8px;color:#bbbbbb;letter-spacing:-0.378px;">4 spaces</div>
<svg class="a" style="left:986px;top:530.5px;" width="10" height="11" viewBox="0 0 10 11"><rect x="0.5" y="5" width="7" height="5.5" fill="#afb1b3"/><path d="M2 5 V3 A2.5 2.5 0 0 1 7 3 M7.5 3 A2.5 2.5 0 0 1 9.5 2" fill="none" stroke="#afb1b3" stroke-width="1.1"/></svg>
<svg class="a" style="left:1006px;top:530.5px;" width="11" height="11" viewBox="0 0 11 11"><path d="M2 3.5 H9 L8 1 H3 Z M0.5 4 H10.5" fill="#afb1b3" stroke="#afb1b3" stroke-width="0.8"/><circle cx="3.5" cy="6.5" r="1.5" fill="#afb1b3"/><circle cx="7.5" cy="6.5" r="1.5" fill="#afb1b3"/><path d="M2 11 Q5.5 7.5 9 11 Z" fill="#afb1b3"/></svg>
<svg class="a" style="left:12.5px;top:552.5px;" width="14" height="14" viewBox="0 0 14 14"><path d="M0 2 L5.8 1.2 V6.6 H0 Z M6.6 1.1 L13.5 0.1 V6.6 H6.6 Z M0 7.4 H5.8 V12.8 L0 12 Z M6.6 7.4 H13.5 V13.9 L6.6 12.9 Z" fill="#ffffff"/></svg>
<div class="a" style="left:38.7px;top:544.3px;width:275.8px;height:31.7px;background:#333333;border:1px solid #545454;border-bottom:none"></div>
<svg class="a" style="left:48px;top:553.5px;" width="14" height="14" viewBox="0 0 14 14"><circle cx="8.5" cy="5" r="4.2" fill="none" stroke="#ffffff" stroke-width="1.1"/><path d="M5.5 8 L0.8 12.8" stroke="#ffffff" stroke-width="1.2"/></svg>
<div class="a t" style="left:71.00px;top:552.90px;font-size:11.5px;color:#e6e6e6;letter-spacing:0.124px;">Type here to search</div>
<svg class="a" style="left:326px;top:552.6px;" width="14" height="14" viewBox="0 0 14 14"><circle cx="7" cy="7" r="5.6" fill="none" stroke="#ffffff" stroke-width="1.5"/></svg>
<svg class="a" style="left:364px;top:552px;" width="16" height="15" viewBox="0 0 16 15"><path d="M1.5 1.2 H10.5 M1.5 13.8 H10.5" stroke="#d8d8d8" stroke-width="1"/><rect x="2.5" y="4" width="7" height="7" fill="none" stroke="#d8d8d8" stroke-width="1"/><path d="M13.3 1 V14 M11.8 6 H14.8" stroke="#d8d8d8" stroke-width="0.9"/></svg>
<svg class="a" style="left:403px;top:550px;" width="18" height="19" viewBox="0 0 18 19"><circle cx="9" cy="8.5" r="7.6" fill="#3ddc84"/><path d="M8.8 5 L3.8 17.5 M9.2 5 L14.2 17.5" stroke="#ffffff" stroke-width="1.3"/><path d="M5.5 12.5 H12.5" stroke="#ffffff" stroke-width="0.9"/><circle cx="9" cy="5.8" r="2.1" fill="#073042"/><path d="M9 2 V4" stroke="#073042" stroke-width="1"/></svg>
<div class="a" style="left:396px;top:574px;width:33px;height:2px;background:#8eb3db;"></div>
<svg class="a" style="left:443px;top:550px;" width="18" height="18" viewBox="0 0 18 18"><circle cx="9" cy="9" r="8.5" fill="#db4437"/><path d="M9 9 L1.6 13.3 A8.5 8.5 0 0 0 13.25 16.4 Z" fill="#0f9d58"/><path d="M9 9 L13.25 16.4 A8.5 8.5 0 0 0 17.5 9 L9 4.5 Z" fill="#ffcd40"/><path d="M9 0.5 A8.5 8.5 0 0 0 1.6 13.3 L5.3 6.7 Z" fill="#db4437"/><circle cx="9" cy="9" r="4" fill="#ffffff"/><circle cx="9" cy="9" r="3.2" fill="#4285f4"/></svg>
<svg class="a" style="left:483px;top:550px;" width="20" height="18" viewBox="0 0 20 18"><path d="M5.5 0.5 L18 2.8 V11.5 L5.5 9.5 Z" fill="#3aa0e8"/><path d="M5.5 0.5 L18 2.8 V4 L5.5 1.7 Z" fill="#7cc4f4"/><path d="M1 14.5 L11 16.8 L13.5 15 L3.5 12.8 Z" fill="#e0e0e0"/></svg>
<div class="a" style="left:512px;top:544px;width:40px;height:32px;background:#3a3a3a;"></div>
<svg class="a" style="left:523px;top:552px;" width="18" height="16" viewBox="0 0 18 16"><rect x="0" y="3" width="18" height="10" rx="1.5" fill="#3ddc84"/><rect x="5.5" y="0.5" width="7" height="15" rx="1" fill="#0b1b3a"/><rect x="6.7" y="2" width="4.6" height="12" fill="#e8f0ff"/></svg>
<div class="a" style="left:512px;top:574px;width:40px;height:2px;background:#8eb3db;"></div>
<svg class="a" style="left:563px;top:551px;" width="19" height="17" viewBox="0 0 19 17"><path d="M0.5 2 H7 L8.5 3.5 H18.5 V15.5 H0.5 Z" fill="#f8c94e"/><path d="M0.5 5.5 H18.5 V15.5 H0.5 Z" fill="#ffd65a"/><rect x="4" y="8.5" width="11" height="5" fill="#2b7fd4"/><rect x="6.5" y="10" width="6" height="3.5" fill="#ffd65a"/></svg>
<div class="a" style="left:556px;top:574px;width:33px;height:2px;background:#8eb3db;"></div>
<svg class="a" style="left:603px;top:551px;" width="19" height="18" viewBox="0 0 19 18"><rect x="0.5" y="0.5" width="17.5" height="17" fill="#2e72c9"/><path d="M0.5 17.5 L7 8 L12 13 L14.5 11 L18 15 V17.5 Z" fill="#0e3f86"/><circle cx="13" cy="5" r="1.8" fill="#cfe3ff"/></svg>
<div class="a" style="left:596px;top:574px;width:33px;height:2px;background:#8eb3db;"></div>
<svg class="a" style="left:819px;top:555px;" width="11" height="7" viewBox="0 0 11 7"><path d="M0.5 6.5 L5.5 1 L10.5 6.5" fill="none" stroke="#ffffff" stroke-width="1.1"/></svg>
<svg class="a" style="left:837px;top:553.5px;" width="14" height="12" viewBox="0 0 14 12"><path d="M2.5 9 Q0 9 0.5 6 Q1 3.8 3.5 4 Q4.5 0.8 8 1 Q11 1.5 11 4.5 Q13 5 13 7" fill="#c8c8c8"/><circle cx="10" cy="9" r="3" fill="#2a8fe0" stroke="#ffffff" stroke-width="0.8"/></svg>
<svg class="a" style="left:856px;top:553px;" width="15" height="15" viewBox="0 0 15 15"><circle cx="7.2" cy="7.2" r="6.5" fill="none" stroke="#ffffff" stroke-width="1"/><ellipse cx="7.2" cy="7.2" rx="3" ry="6.5" fill="none" stroke="#ffffff" stroke-width="1"/><path d="M0.7 7.2 H13.7 M1.8 3.8 H12.6 M1.8 10.6 H12.6" stroke="#ffffff" stroke-width="0.9"/></svg>
<svg class="a" style="left:876px;top:554px;" width="13" height="12" viewBox="0 0 13 12"><path d="M0.5 4 H3 L6.5 0.8 V11.2 L3 8 H0.5 Z" fill="none" stroke="#ffffff" stroke-width="0.9"/><path d="M8.5 3.5 Q10 6 8.5 8.5 M10.5 2 Q13 6 10.5 10" fill="none" stroke="#ffffff" stroke-width="0.9"/></svg>
<div class="a t" style="left:897.20px;top:553.00px;font-size:10px;color:#ffffff;letter-spacing:-1.190px;">ENG</div>
<div class="a t" style="left:939.60px;top:545.00px;font-size:10px;color:#ffffff;letter-spacing:-0.465px;">12:52</div>
<div class="a t" style="left:926.50px;top:560.50px;font-size:10px;color:#ffffff;letter-spacing:-0.185px;">10-06-2020</div>
<div class="a" style="left:1021.5px;top:544px;width:1px;height:32px;background:#5a5a5a;"></div>
<svg class="a" style="left:991px;top:553px;" width="14" height="14" viewBox="0 0 14 14"><path d="M0.5 0.5 H13 V10 H6.5 L3.5 13 V10 H0.5 Z" fill="none" stroke="#ffffff" stroke-width="1"/></svg>
<div class="a" style="left:994px;top:67.5px;width:14px;height:422.5px;background:#2b2b2b;"></div>
<div class="a" style="left:996px;top:67.5px;width:11px;height:422.5px;background:#2e2e2e;"></div>
<div class="a" style="left:1000px;top:340px;width:6.5px;height:91.3px;background:#4a4c4d;"></div>
<div class="a" style="left:996.3px;top:213.3px;width:1px;height:63.4px;background:#555555;"></div>
<div class="a" style="left:996px;top:68.3px;width:11px;height:9px;background:#b38b2e;"></div>
<div class="a" style="left:996px;top:123.5px;width:11px;height:1.9px;background:#b38b2e;"></div>
<div class="a" style="left:996px;top:131.5px;width:11px;height:1.9px;background:#b38b2e;"></div>
<div class="a" style="left:996px;top:135px;width:11px;height:1.9px;background:#b38b2e;"></div>
<div class="a" style="left:996px;top:138.5px;width:11px;height:1.9px;background:#b38b2e;"></div>
<div class="a" style="left:996px;top:149px;width:11px;height:1.9px;background:#b38b2e;"></div>
<div class="a" style="left:996px;top:151.5px;width:11px;height:1.9px;background:#b38b2e;"></div>
<div class="a" style="left:996px;top:162.5px;width:11px;height:1.9px;background:#b38b2e;"></div>
<div class="a" style="left:996px;top:171.4px;width:11px;height:1.9px;background:#b38b2e;"></div>
<div class="a" style="left:996px;top:179.2px;width:11px;height:1.9px;background:#b38b2e;"></div>
<div class="a" style="left:996px;top:202px;width:11px;height:1.9px;background:#b38b2e;"></div>
<div class="a" style="left:996px;top:289px;width:11px;height:1.9px;background:#b38b2e;"></div>
<div class="a" style="left:996px;top:304px;width:11px;height:1.9px;background:#b38b2e;"></div>
<div class="a" style="left:996px;top:328px;width:11px;height:1.9px;background:#b38b2e;"></div>
<div class="a" style="left:996px;top:358.5px;width:11px;height:1.9px;background:#b38b2e;"></div>
<div class="a" style="left:996px;top:366.2px;width:11px;height:1.9px;background:#b38b2e;"></div>
<div class="a" style="left:996px;top:370.5px;width:11px;height:1.9px;background:#b38b2e;"></div>
<div class="a" style="left:996px;top:401.3px;width:11px;height:1.9px;background:#b38b2e;"></div>
<div class="a" style="left:996px;top:421.3px;width:11px;height:1.9px;background:#b38b2e;"></div>
<div class="a" style="left:996px;top:448.5px;width:11px;height:1.9px;background:#b38b2e;"></div>
<div class="a" style="left:1008px;top:46px;width:16px;height:463px;background:#3c3f41;"></div>
<div class="a" style="left:1008px;top:46px;width:1px;height:463px;background:#323232;"></div>
<svg class="a" style="left:1013px;top:407px;" width="9" height="11" viewBox="0 0 9 11"><rect x="0.6" y="0.6" width="7.5" height="9.8" rx="1" fill="none" stroke="#afb1b3" stroke-width="1.1"/><rect x="2" y="2" width="4.7" height="6" fill="#afb1b3"/></svg>
<div class="a t" style="left:981.50px;top:448.70px;width:70.00px;font-size:9.5px;letter-spacing:-0.750px;transform:rotate(90deg);transform-origin:50% 50%">Device File Explorer</div>
<div class="a" style="left:1000.7px;top:50px;width:23.3px;height:297.4px;background:#f2f2f2;"></div>
<div class="a" style="left:1008px;top:60px;width:4px;height:1px;background:#9aaab4;"></div>
<svg class="a" style="left:1013px;top:75px;" width="11" height="13" viewBox="0 0 11 13"><path d="M3 3.5 A4.5 4.5 0 1 0 9 3.5" fill="none" stroke="#5d7a8c" stroke-width="1.2"/><path d="M6 0.5 V6" stroke="#5d7a8c" stroke-width="1.2"/></svg>
<svg class="a" style="left:1013px;top:100px;" width="11" height="13" viewBox="0 0 11 13"><path d="M0.5 4 H3 L7 1 V12 L3 9 H0.5 Z" fill="#5d7a8c"/><path d="M8.5 3.5 Q10.5 6.5 8.5 9.5" fill="none" stroke="#5d7a8c" stroke-width="1.2"/></svg>
<svg class="a" style="left:1013px;top:125px;" width="11" height="13" viewBox="0 0 11 13"><path d="M1.5 4.5 H3.5 L7 1.5 V11.5 L3.5 8.5 H1.5 Z" fill="#5d7a8c"/></svg>
<svg class="a" style="left:1012px;top:150px;" width="12" height="15" viewBox="0 0 12 15"><rect x="3.2" y="2.8" width="6" height="8.5" rx="0.8" transform="rotate(-48 6.2 7)" fill="none" stroke="#5d7a8c" stroke-width="1.4"/><path d="M4.5 1.2 Q8.5 -0.2 11.5 3" fill="none" stroke="#5d7a8c" stroke-width="0.8"/></svg>
<svg class="a" style="left:1012px;top:175px;" width="12" height="15" viewBox="0 0 12 15"><rect x="3.2" y="3.5" width="6" height="8.5" rx="0.8" transform="rotate(48 6.2 7.7)" fill="none" stroke="#5d7a8c" stroke-width="1.4"/><path d="M0.5 5.5 Q2 1.5 6.5 1.5" fill="none" stroke="#5d7a8c" stroke-width="0.8"/></svg>
<svg class="a" style="left:1013px;top:201px;" width="11" height="11" viewBox="0 0 11 11"><path d="M0.5 2.5 H3 L4 1 H8 L9 2.5 H11 V10 H0.5 Z" fill="#5d7a8c"/><circle cx="6" cy="6" r="2" fill="#f2f2f2"/></svg>
<svg class="a" style="left:1013px;top:226px;" width="11" height="11" viewBox="0 0 11 11"><circle cx="4.5" cy="4.5" r="3.6" fill="none" stroke="#5d7a8c" stroke-width="1.1"/><path d="M7 7 L10.5 10.5 M2.8 4.5 H6.2 M4.5 2.8 V6.2" stroke="#5d7a8c" stroke-width="1.1"/></svg>
<svg class="a" style="left:1013px;top:251px;" width="10" height="11" viewBox="0 0 10 11"><path d="M8.5 0.8 V10.2 L1 5.5 Z" fill="none" stroke="#5d7a8c" stroke-width="1.1"/></svg>
<svg class="a" style="left:1013px;top:276px;" width="11" height="11" viewBox="0 0 11 11"><circle cx="5.5" cy="5.5" r="4.3" fill="none" stroke="#5d7a8c" stroke-width="1.1"/></svg>
<svg class="a" style="left:1013px;top:301px;" width="11" height="11" viewBox="0 0 11 11"><rect x="1" y="1" width="8.5" height="8.5" fill="none" stroke="#5d7a8c" stroke-width="1.1"/></svg>
<svg class="a" style="left:1013px;top:330px;" width="11" height="4" viewBox="0 0 11 4"><circle cx="1.5" cy="2" r="1.1" fill="#5d7a8c"/><circle cx="5" cy="2" r="1.1" fill="#5d7a8c"/><circle cx="8.5" cy="2" r="1.1" fill="#5d7a8c"/></svg>
<div class="a" style="left:781.7px;top:50.2px;width:213.4px;height:458.8px;border-radius:27px;background:#1c1c1c"></div>
<div class="a" style="left:782.9px;top:51.4px;width:211px;height:456.4px;border-radius:26px;background:#0b0b0b;border:1.9px solid #4c4c4c"></div>
<div class="a" style="left:786.3px;top:54.8px;width:204.2px;height:449.6px;border-radius:22.5px;border:1px solid #303030"></div>
<div class="a" style="left:816.5px;top:67.7px;width:9px;height:9px;border-radius:50%;background:#161616;border:1px solid #2c2c2c"></div>
<div class="a" style="left:843.5px;top:67.7px;width:9px;height:9px;border-radius:50%;background:#161616;border:1px solid #2c2c2c"></div>
<div class="a" style="left:864px;top:63.5px;width:49px;height:3.5px;border-radius:2px;background:#1e1e1e"></div>
<div class="a" style="left:920px;top:69.5px;width:6px;height:6px;border-radius:50%;background:#000"></div>
<div class="a" style="left:790.2px;top:84.8px;width:197.6px;height:394.2px;border-radius:9px 9px 12px 12px;background:#000;overflow:hidden"><div class="a" style="left:0;top:0;width:197.6px;height:11.8px;background:#3700b3"></div><div class="a" style="left:0;top:11.8px;width:197.6px;height:27.9px;background:#6200ee"></div><div class="a" style="left:0;top:39.7px;width:197.6px;height:330.8px;background:#fafafa"></div><div class="a" style="left:16.7px;top:371.2px;width:50px;height:23.4px;border-radius:12px;background:#1e1e1e"></div></div>
<div class="a t" style="left:794.30px;top:82.90px;font-size:8.5px;color:#f0eaff;letter-spacing:-0.734px;">12:52</div>
<svg class="a" style="left:816.5px;top:86.9px;" width="7.6" height="7.6" viewBox="0 0 7.6 7.6"><g transform="translate(3.8 3.8)"><path d="M-0.9 -3.6 H0.9 L1.1 -2.6 L2 -2.1 L2.9 -2.7 L4 -1.4 L3.3 -0.6 L3.4 0.5 L4.2 1.1 L3.3 2.6 L2.3 2.2 L1.4 2.9 L1.2 3.8 H-1 L-1.3 2.8 L-2.1 2.3 L-3.1 2.7 L-4 1.3 L-3.3 0.6 L-3.4 -0.6 L-4.1 -1.2 L-3.2 -2.7 L-2.2 -2.2 L-1.2 -2.7 Z" fill="#ffffff"/><circle r="1.2" fill="#3700b3"/></g></svg>
<svg class="a" style="left:827.8000000000001px;top:86.9px;" width="7.6" height="7.6" viewBox="0 0 7.6 7.6"><g transform="translate(3.8 3.8)"><path d="M-0.9 -3.6 H0.9 L1.1 -2.6 L2 -2.1 L2.9 -2.7 L4 -1.4 L3.3 -0.6 L3.4 0.5 L4.2 1.1 L3.3 2.6 L2.3 2.2 L1.4 2.9 L1.2 3.8 H-1 L-1.3 2.8 L-2.1 2.3 L-3.1 2.7 L-4 1.3 L-3.3 0.6 L-3.4 -0.6 L-4.1 -1.2 L-3.2 -2.7 L-2.2 -2.2 L-1.2 -2.7 Z" fill="#ffffff"/><circle r="1.2" fill="#3700b3"/></g></svg>
<div class="a" style="left:864.2px;top:89.7px;width:2px;height:2px;background:#ffffff;"></div>
<svg class="a" style="left:961.5px;top:87px;" width="8" height="7" viewBox="0 0 8 7"><path d="M0.5 2 Q4 -0.5 7.5 2 L4 6.5 Z" fill="#8a6fd0"/><rect x="5" y="4" width="2.5" height="2.5" fill="#ffffff"/></svg>
<div class="a" style="left:979.5px;top:87px;width:4px;height:7.5px;background:#ffffff;"></div>
<div class="a" style="left:980.5px;top:86.2px;width:2px;height:1px;background:#ffffff;"></div>
<div class="a t" style="left:798.80px;top:103.30px;font-size:10.5px;color:#ffffff;letter-spacing:-0.495px;font-weight:bold;">delete sqldata</div>
<div class="a t" style="left:870.60px;top:136.20px;font-size:13px;color:#717171;letter-spacing:-0.491px;">Details</div>
<div class="a t" style="left:805.30px;top:159.90px;font-size:9.6px;color:#747474;letter-spacing:-0.305px;">2 : Barath, 992523234534</div>
<div class="a t" style="left:805.30px;top:170.45px;font-size:9.6px;color:#747474;letter-spacing:-0.334px;">3 : Chandru, 983434543</div>
<div class="a t" style="left:805.30px;top:181.00px;font-size:9.6px;color:#747474;letter-spacing:-0.272px;">4 : Ansari, 889342234</div>
<div class="a t" style="left:805.30px;top:191.55px;font-size:9.6px;color:#747474;letter-spacing:-0.363px;">5 : Kanna, 8992344322</div>
<svg class="a" style="left:827.5px;top:462.8px;" width="9" height="10" viewBox="0 0 9 10"><path d="M7.8 0.2 V9 L0.5 4.6 Z" fill="#ffffff"/></svg>
<div class="a" style="left:885.2px;top:463.7px;width:7px;height:7px;border-radius:50%;background:#ffffff"></div>
<div class="a" style="left:942.2px;top:463.8px;width:6.8px;height:6.8px;background:#ffffff;"></div>
<div class="a" style="left:864.4px;top:493.5px;width:48.6px;height:3.5px;border-radius:2px;background:#222222"></div>
</body></html>
